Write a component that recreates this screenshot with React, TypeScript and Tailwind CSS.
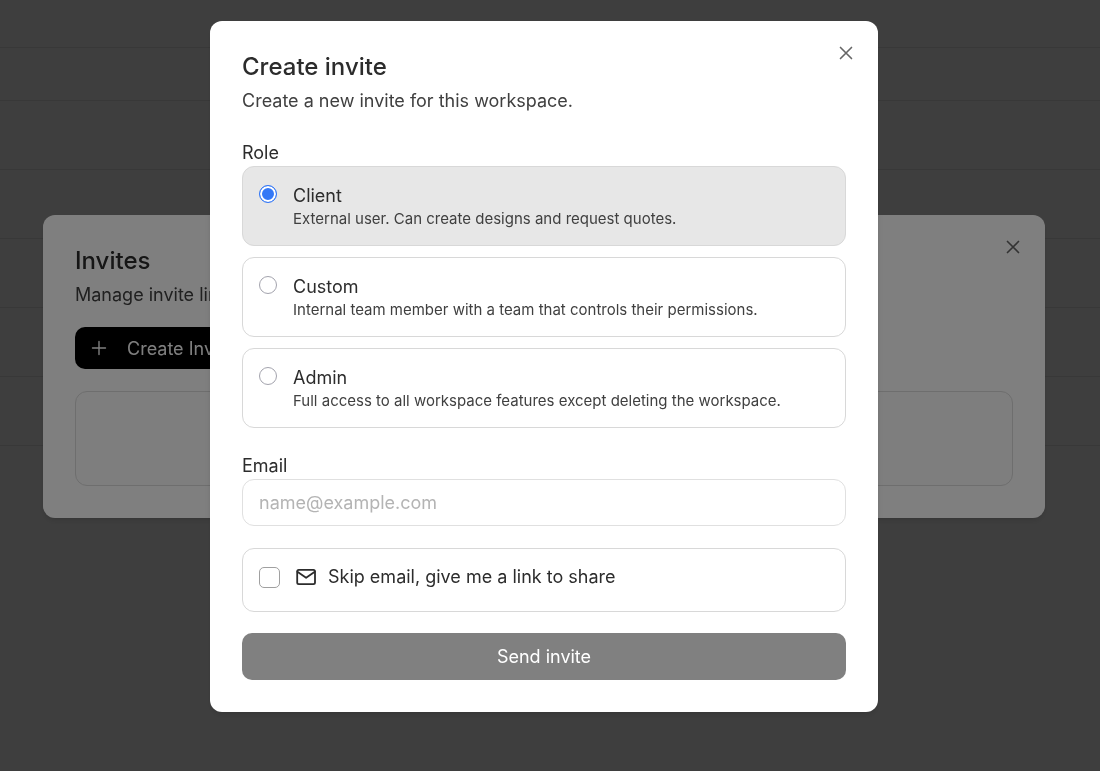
import { useState } from "react";

const roles = [
  { id: "client", name: "Client", detail: "External user. Can create designs and request quotes." },
  { id: "custom", name: "Custom", detail: "Internal team member with a team that controls their permissions." },
  { id: "admin", name: "Admin", detail: "Full access to all workspace features except deleting the workspace." },
];

function CloseIcon() {
  return (
    <svg className="size-[22px]" viewBox="0 0 24 24" fill="none" stroke="currentColor" strokeWidth="1.8" strokeLinecap="round">
      <path d="M18 6 6 18M6 6l12 12" />
    </svg>
  );
}

function MailIcon() {
  return (
    <svg className="size-6" viewBox="0 0 24 24" fill="none" stroke="currentColor" strokeWidth="1.8" strokeLinecap="round" strokeLinejoin="round">
      <rect x="3.2" y="4.8" width="17.8" height="14.4" rx="1.6" />
      <path d="m3.4 6.8 8.7 6 8.7-6" />
    </svg>
  );
}

function Heading({ title, detail }: { title: string; detail: string }) {
  return (
    <header className="flex flex-col gap-1.5">
      <h2 className="text-2xl leading-7 font-medium">{title}</h2>
      <p className="text-[18px] leading-7 text-[#404040]">{detail}</p>
    </header>
  );
}

function CloseButton() {
  return (
    <button type="button" aria-label="Close" className="absolute top-[21px] right-[21px] text-[#666]">
      <CloseIcon />
    </button>
  );
}

export default function App() {
  const [role, setRole] = useState("client");
  const rows = [0, 1, 2, 3, 4];

  return (
    <div className="relative min-h-screen bg-[#f8f8f8] font-['Inter',sans-serif] text-[#2c2c2c]">
      <div className="flex flex-col" aria-hidden="true">
        <div className="h-12 border-b border-[#e0e0e0]" />
        <div className="h-[53px] border-b border-[#e0e0e0]" />
        {rows.map((row) => (
          <div key={row} className="h-[69px] border-b border-[#e0e0e0]" />
        ))}
      </div>

      <div className="fixed inset-0 flex items-center justify-center bg-black/50 pr-3 pb-[38px]">
        <section className="relative flex w-full max-w-[1002px] flex-col rounded-xl bg-white p-8 shadow-md">
          <Heading title="Invites" detail="Manage invite links." />
          <CloseButton />
          <button type="button" className="mt-[18px] flex h-[42px] items-center gap-4 self-start rounded-[10px] bg-black pr-6 pl-3 text-[18px] text-white">
            <svg className="size-6" viewBox="0 0 24 24" fill="none" stroke="currentColor" strokeWidth="1.4" strokeLinecap="round">
              <path d="M5.5 12h13M12 5.5v13" />
            </svg>
            Create Invite
          </button>
          <div className="mt-[22px] h-[95px] rounded-xl border border-[#dcdcdc] bg-[#fcfcfc]" />
        </section>
      </div>

      <div className="fixed inset-0 flex items-center justify-center bg-black/50 pr-3 pb-[38px]">
        <form role="dialog" aria-label="Create invite" className="relative flex w-full max-w-[668px] flex-col rounded-xl bg-white p-8 shadow-md">
          <Heading title="Create invite" detail="Create a new invite for this workspace." />
          <CloseButton />

          <fieldset className="mt-[25px] flex flex-col">
            <legend className="text-[18px] leading-[26px]">Role</legend>
            <div className="flex flex-col gap-[11px]">
              {roles.map((item) => (
                <label
                  key={item.id}
                  className="flex items-start gap-4 rounded-xl border border-[#d8d8d8] px-4 pt-[17px] pb-[15px] has-checked:bg-[#e7e7e7]"
                >
                  <input
                    type="radio"
                    name="role"
                    value={item.id}
                    checked={role === item.id}
                    onChange={() => setRole(item.id)}
                    className="mt-px size-[18px] shrink-0 appearance-none rounded-full border border-[#a3a3ad] bg-white checked:border-[#3478f6] checked:bg-[#3478f6] checked:shadow-[inset_0_0_0_2px_#fff]"
                  />
                  <span className="flex flex-col">
                    <span className="text-[18px] leading-6">{item.name}</span>
                    <span className="text-[15px] leading-[22px] text-[#404040]">{item.detail}</span>
                  </span>
                </label>
              ))}
            </div>
          </fieldset>

          <label htmlFor="email" className="mt-[25px] text-[18px] leading-[26px]">Email</label>
          <input
            id="email"
            type="email"
            placeholder="name@example.com"
            className="h-[47px] rounded-xl border border-[#e0e0e0] px-4 text-[18px] placeholder:text-[#b4b4b4]"
          />

          <label className="mt-[22px] flex h-16 items-start rounded-xl border border-[#d8d8d8] px-4 pt-4 text-[18px] leading-6">
            <input type="checkbox" className="mt-0.5 size-[21px] shrink-0 appearance-none rounded-[5px] border border-[#a0a0a0] bg-white checked:bg-[#3478f6]" />
            <span className="mr-2.5 ml-3.5"><MailIcon /></span>
            Skip email, give me a link to share
          </label>

          <button type="submit" disabled className="mt-[21px] h-[47px] rounded-[10px] bg-[#808080] text-[18px] text-white">
            Send invite
          </button>
        </form>
      </div>
    </div>
  );
}
